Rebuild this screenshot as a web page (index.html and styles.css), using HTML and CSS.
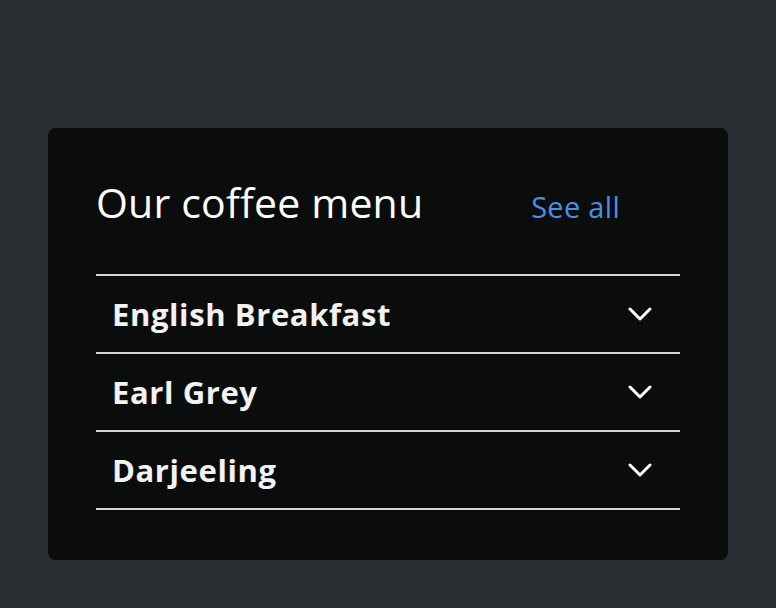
FILE: index.html
```html
<!DOCTYPE html>
<html lang="en">
<head>
<meta charset="utf-8">
<title>Our coffee menu</title>
<link rel="stylesheet" href="styles.css">
</head>
<body>
<section class="card">
  <header class="card-header">
    <h2 class="card-title">Our coffee menu</h2>
    <a class="see-all" href="#">See all</a>
  </header>
  <ul class="menu">
    <li class="menu-item"><span class="item-name">English Breakfast</span><svg class="chevron" viewBox="0 0 24 14" width="24" height="14"><path d="M2 2 L12 12 L22 2" fill="none" stroke="#fff" stroke-width="3" stroke-linecap="round" stroke-linejoin="round"/></svg></li>
    <li class="menu-item"><span class="item-name">Earl Grey</span><svg class="chevron" viewBox="0 0 24 14" width="24" height="14"><path d="M2 2 L12 12 L22 2" fill="none" stroke="#fff" stroke-width="3" stroke-linecap="round" stroke-linejoin="round"/></svg></li>
    <li class="menu-item"><span class="item-name">Darjeeling</span><svg class="chevron" viewBox="0 0 24 14" width="24" height="14"><path d="M2 2 L12 12 L22 2" fill="none" stroke="#fff" stroke-width="3" stroke-linecap="round" stroke-linejoin="round"/></svg></li>
  </ul>
</section>
</body>
</html>
```
FILE: styles.css
```css
html, body {
  margin: 0;
  padding: 0;
}
body {
  background: #2b2e33;
  font-family: "Open Sans", "Liberation Sans", sans-serif;
  padding: 128px 48px 48px 48px;
  height: 608px;
  box-sizing: border-box;
}
.card {
  background: #0b0c0c;
  border-radius: 8px;
  padding: 50px 48px 50px 48px;
  height: 432px;
  box-sizing: border-box;
}
.card-header {
  display: flex;
  justify-content: space-between;
  align-items: baseline;
  height: 96px;
  border-bottom: 2px solid #d4d4d4;
}
.card-title {
  margin: 0;
  font-size: 41px;
  font-weight: 400;
  letter-spacing: 0.2px;
  color: #ffffff;
  line-height: 48px;
}
.see-all {
  color: #4a90e2;
  font-size: 29px;
  letter-spacing: 0.3px;
  text-decoration: none;
  margin-right: 60px;
}
.menu {
  list-style: none;
  margin: 0;
  padding: 0;
}
.menu-item {
  display: flex;
  align-items: center;
  justify-content: space-between;
  height: 76px;
  padding: 0 28px 0 16px;
  border-bottom: 2px solid #d4d4d4;
}
.item-name {
  color: #f2f2f2;
  font-size: 31px;
  letter-spacing: 0.6px;
  font-weight: 700;
}
.chevron {
  display: block;
}
```
